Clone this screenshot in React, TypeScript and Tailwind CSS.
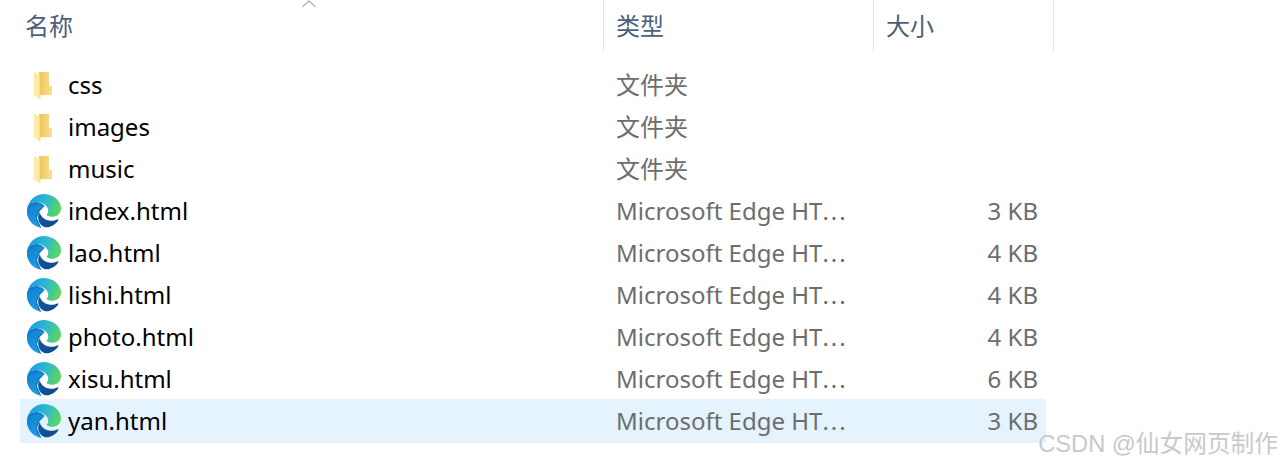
const font = "font-['Noto_Sans','Noto_Sans_CJK_SC',sans-serif]";

type FileRow = {
  name: string;
  kind: "folder" | "edge";
  type: string;
  size?: string;
  selected?: boolean;
};

const edgeType = "Microsoft Edge HT";

const rows: FileRow[] = [
  { name: "css", kind: "folder", type: "文件夹" },
  { name: "images", kind: "folder", type: "文件夹" },
  { name: "music", kind: "folder", type: "文件夹" },
  { name: "index.html", kind: "edge", type: edgeType, size: "3 KB" },
  { name: "lao.html", kind: "edge", type: edgeType, size: "4 KB" },
  { name: "lishi.html", kind: "edge", type: edgeType, size: "4 KB" },
  { name: "photo.html", kind: "edge", type: edgeType, size: "4 KB" },
  { name: "xisu.html", kind: "edge", type: edgeType, size: "6 KB" },
  { name: "yan.html", kind: "edge", type: edgeType, size: "3 KB", selected: true },
];

function FolderIcon({ id }: { id: string }) {
  return (
    <svg width="18" height="27" viewBox="0 0 18 27" className="-ml-[3px] shrink-0">
      <defs>
        <linearGradient id={id} x1="0" y1="0" x2="1" y2="0">
          <stop offset="0" stopColor="#efc557" />
          <stop offset="1" stopColor="#fadf92" />
        </linearGradient>
      </defs>
      <path d="M5 0h10v14h3v9H5z" fill={`url(#${id})`} />
      <path d="M0 0l6 2.500V27l-5.500-3L0 23z" fill="#fdeba6" />
      <path d="M6 2.500V27" stroke="#e9c76f" strokeWidth="0.7" />
    </svg>
  );
}

function EdgeIcon({ id }: { id: string }) {
  return (
    <svg width="34" height="34" viewBox="0 0 24 24" className="shrink-0">
      <defs>
        <linearGradient id={`${id}-top`} x1="0" y1="0.3" x2="1" y2="0.6">
          <stop offset="0" stopColor="#1b9de2" />
          <stop offset="0.5" stopColor="#2fb8cf" />
          <stop offset="1" stopColor="#5ed85a" />
        </linearGradient>
        <linearGradient id={`${id}-left`} x1="0" y1="0" x2="0.6" y2="1">
          <stop offset="0" stopColor="#0f7fd2" />
          <stop offset="1" stopColor="#1f9fe0" />
        </linearGradient>
        <linearGradient id={`${id}-low`} x1="0" y1="0" x2="1" y2="0.6">
          <stop offset="0" stopColor="#0c59a4" />
          <stop offset="1" stopColor="#114a8b" />
        </linearGradient>
      </defs>
      {/* backing so the three swooshes touch, as in the real logo */}
      <path d="M1 7.500C4 5 9 4.500 12.500 8.500L9 12 7 17l3 6.800C4.500 22.500 0 18 0 12c0-1.800.4-3.200 1-4.500z" fill="#1177c9" />
      <path
        d="M21.860 17.860q.14 0 .25.12.1.13.1.25t-.11.33l-.32.46-.43.53-.44.5q-.21.25-.38.42l-.22.23q-.58.53-1.340 1.040-.76.51-1.600.91-.86.4-1.740.64t-1.670.24q-.9 0-1.690-.28-.8-.28-1.480-.78-.68-.5-1.220-1.170-.53-.66-.92-1.440-.38-.77-.58-1.600-.2-.83-.2-1.670 0-1 .32-1.960.33-.97.87-1.800.14.95.55 1.770.41.82 1.020 1.500.6.68 1.380 1.210.78.54 1.640.9.86.36 1.770.56.92.2 1.800.2 1.120 0 2.180-.24 1.060-.23 2.060-.72l.2-.1.2-.05z"
        fill={`url(#${id}-low)`}
      />
      <path
        d="M6.360 16.590q0 1.100.27 2.150.27 1.060.78 2.030.51.96 1.240 1.770.74.82 1.660 1.400-1.470-.2-2.800-.74-1.330-.55-2.480-1.370-1.150-.83-2.080-1.900-.92-1.070-1.580-2.330T.36 14.940Q0 13.540 0 12.060q0-.81.32-1.490.31-.68.83-1.230.53-.55 1.200-.96.66-.4 1.350-.66.74-.27 1.500-.39.78-.12 1.550-.12.7 0 1.420.1.72.12 1.400.35.68.23 1.320.57.63.35 1.160.83-.35 0-.7.07-.33.07-.65.23v-.02q-.63.28-1.200.74-.57.46-1.050 1.040-.48.58-.87 1.260-.38.67-.65 1.390-.27.71-.42 1.440-.15.72-.15 1.380z"
        fill={`url(#${id}-left)`}
      />
      <path
        d="M11.960.06q1.700 0 3.330.39 1.630.38 3.070 1.150 1.430.77 2.620 1.930 1.180 1.160 1.980 2.700.49.94.76 1.960.28 1 .28 2.080 0 .89-.23 1.700-.24.8-.69 1.480-.45.68-1.100 1.220-.64.53-1.450.88-.54.24-1.110.36-.58.13-1.160.13-.42 0-.97-.03-.54-.03-1.100-.12-.55-.1-1.050-.28-.5-.19-.84-.5-.12-.09-.23-.24-.1-.16-.1-.33 0-.15.16-.35.16-.2.35-.5.2-.28.36-.68.16-.4.16-.95 0-1.060-.4-1.960-.4-.91-1.060-1.640-.66-.74-1.520-1.280-.86-.55-1.790-.89-.84-.3-1.720-.44-.87-.14-1.760-.14-1.550 0-3.060.45T.94 7.550q.71-1.740 1.810-3.130 1.100-1.380 2.520-2.360Q6.680 1.080 8.370.58q1.700-.5 3.580-.52z"
        fill={`url(#${id}-top)`}
      />
    </svg>
  );
}

function HeaderCell({ label, className }: { label: string; className: string }) {
  return (
    <div className={`flex h-full items-center border-r border-[#e5e5e5] pl-3 text-[24px] text-[#4c607a] ${className}`}>
      {label}
    </div>
  );
}

export default function App() {
  return (
    <div className={`relative h-[465px] w-[1281px] overflow-hidden bg-white ${font}`}>
      <div className="flex h-[51px]">
        <div className="relative flex h-full w-[604px] items-center border-r border-[#e5e5e5] pl-[25px] text-[24px] text-[#4c607a]">
          名称
          <svg width="14" height="8" viewBox="0 0 14 8" className="absolute left-[302px] top-0">
            <path d="M0.500 7L7 0.800 13.500 7" fill="none" stroke="#7d7d7d" strokeWidth="1" />
          </svg>
        </div>
        <HeaderCell label="类型" className="w-[270px]" />
        <HeaderCell label="大小" className="w-[180px]" />
      </div>

      <div className="ml-[20px] mt-[13px] w-[1026px]">
        {rows.map((row) => (
          <div
            key={row.name}
            className={`flex items-center text-[24px] ${row.selected ? "-mt-px h-[44px] bg-[#e5f3fe]" : "h-[42px]"}`}
          >
            <div className="flex w-[48px] justify-center">
              {row.kind === "folder" ? (
                <FolderIcon id={`folder-${row.name}`} />
              ) : (
                <EdgeIcon id={`edge-${row.name.split(".")[0]}`} />
              )}
            </div>
            <div className="w-[548px] text-black">{row.name}</div>
            <div className="w-[300px] truncate text-[#6d6d6d]">
              {row.type}
              {row.kind === "edge" && <span className="tracking-[2px]">...</span>}
            </div>
            <div className="flex-1 pr-[8px] text-right text-[#6d6d6d]">{row.size}</div>
          </div>
        ))}
      </div>

      <div className="absolute bottom-[8px] right-[3px] font-['Liberation_Sans','Noto_Sans_CJK_SC',sans-serif] text-[23.7px] leading-none text-[#c9c9c9] [text-shadow:0_0_1px_#ffffff]">
        CSDN @仙女网页制作
      </div>
    </div>
  );
}
